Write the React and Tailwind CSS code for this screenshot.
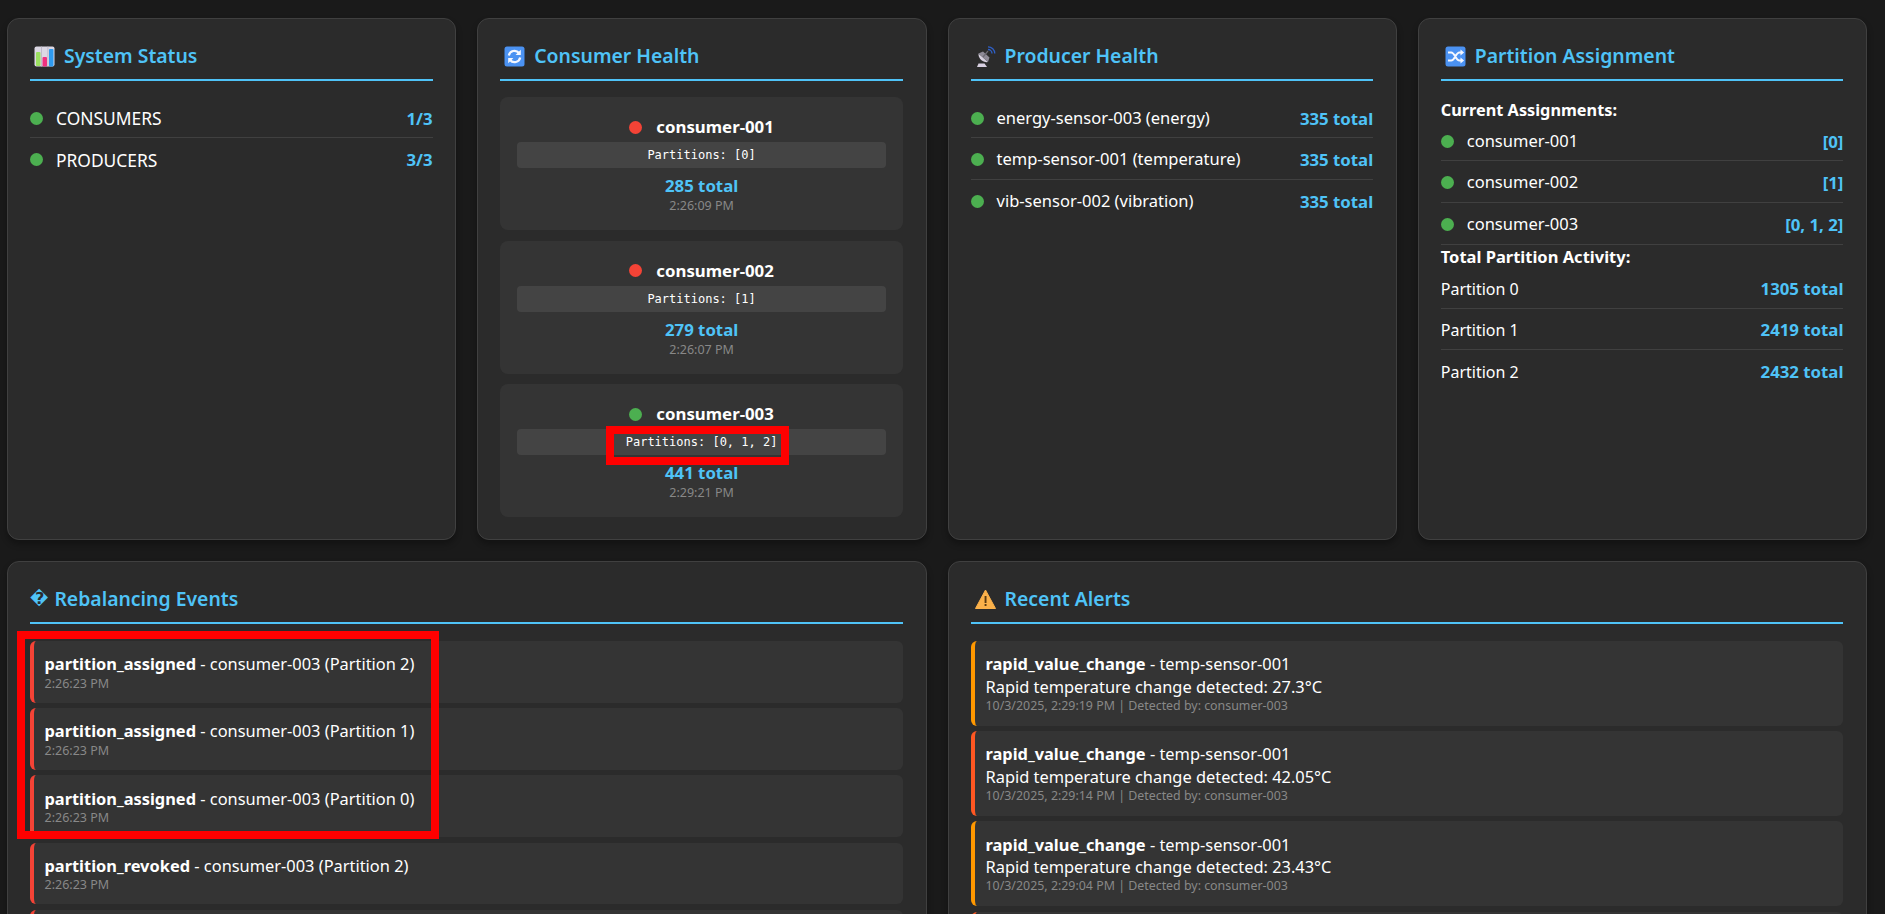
const Dot = ({ color = 'bg-[#4caf50]' }) => (
  <span className={`inline-block w-[13px] h-[13px] rounded-full shrink-0 ${color}`} />
)

const ChartIcon = () => (
  <svg width="21" height="21" viewBox="0 0 21 21" className="shrink-0">
    <rect x="0.5" y="0.5" width="20" height="20" rx="2" fill="#dcd8e4" />
    <rect x="7" y="0.5" width="0.8" height="20" fill="#b9b4c4" />
    <rect x="13.5" y="0.5" width="0.8" height="20" fill="#b9b4c4" />
    <rect x="2" y="6" width="4.5" height="14" rx="1" fill="#9be060" />
    <rect x="8.5" y="11" width="4.5" height="9.5" rx="1" fill="#f0307f" />
    <rect x="15" y="3" width="4.5" height="17.5" rx="1" fill="#2f9bf0" />
  </svg>
)

const RefreshIcon = () => (
  <svg width="21" height="21" viewBox="0 0 21 21" className="shrink-0">
    <rect x="0.5" y="0.5" width="20" height="20" rx="2.5" fill="#4b92f2" />
    <path d="M4.8 9.5A5.8 5.8 0 0 1 15 7" fill="none" stroke="#f4f7ff" strokeWidth="2.2" />
    <path d="M16.8 3.8V9h-5.2z" fill="#f4f7ff" />
    <path d="M16.2 11.5A5.8 5.8 0 0 1 6 14" fill="none" stroke="#f4f7ff" strokeWidth="2.2" />
    <path d="M4.2 17.2V12h5.2z" fill="#f4f7ff" />
  </svg>
)

const DishIcon = () => (
  <svg width="21" height="21" viewBox="0 0 21 21" className="shrink-0">
    <path d="M2 21l1.5-3.5h6L12 21z" fill="#d8d0e2" />
    <path d="M3.5 7.5A8 8 0 0 0 13 16z" fill="#d5cfdd" />
    <path d="M3.5 7.5L13 16l1.5-4.5L8 5.5z" fill="#8e8a96" />
    <path d="M8 11l5-6" stroke="#6d6a74" strokeWidth="1.2" />
    <path d="M13 3.5a4 4 0 0 1 4 4M13 .8a6.8 6.8 0 0 1 6.8 6.8" fill="none" stroke="#2f5fc4" strokeWidth="1.3" />
  </svg>
)

const ShuffleIcon = () => (
  <svg width="21" height="21" viewBox="0 0 21 21" className="shrink-0">
    <rect x="0.5" y="0.5" width="20" height="20" rx="2.5" fill="#4b92f2" />
    <path d="M3 6.5h3.2c3.6 0 4.6 8 8.2 8H16M3 14.5h3.2c3.6 0 4.6-8 8.2-8H16" fill="none" stroke="#f4f7ff" strokeWidth="2" />
    <path d="M15.5 3.5l3.6 3-3.6 3zM15.5 11.5l3.6 3-3.6 3z" fill="#f4f7ff" />
  </svg>
)

const WarningIcon = () => (
  <svg width="21" height="20" viewBox="0 0 21 20" className="shrink-0">
    <path d="M10.5 1L20.5 19.5H.5z" fill="#fbb14a" stroke="#fbb14a" strokeLinejoin="round" />
    <rect x="9.6" y="7" width="1.9" height="7" fill="#5a3a10" />
    <rect x="9.6" y="15" width="1.9" height="2" fill="#5a3a10" />
  </svg>
)

const Card = ({ icon, title, children }) => (
  <div className="bg-[#2b2b2b] border border-[#404040] rounded-xl pl-[22px] pr-[22.6px] py-[22px] shadow-[0_4px_6px_rgba(0,0,0,0.3)]">
    <h3 className="flex items-center pb-2 mb-4 border-b-2 border-[#4fc3f7] text-[19.4px] leading-[30px] font-semibold text-[#4fc3f7]">
      {icon}
      {title}
    </h3>
    {children}
  </div>
)

const Row = ({ label, value, dot = true, labelSize = 'text-[16.5px]' }) => (
  <div className={`flex items-center justify-between h-[41.3px] border-b border-[#404040] last:border-b-0 text-white ${dot ? 'pt-[2px]' : 'pt-[1px]'}`}>
    <div className="flex items-center">
      {dot && <Dot />}
      <span className={`${labelSize} ${dot ? 'ml-[13px]' : ''}`}>{label}</span>
    </div>
    <span className="text-[16.8px] font-bold text-[#4fc3f7]">{value}</span>
  </div>
)

const ConsumerCard = ({ name, color, partitions, total, time }) => (
  <div className="bg-[#343434] rounded-lg px-[16.5px] pt-[18px] pb-[16px] text-center">
    <div className="flex items-center justify-center h-6 text-[16.8px] font-bold text-white">
      <Dot color={color} />
      <span className="ml-[14px]">{name}</span>
    </div>
    <div className="mt-[3px] h-[26px] rounded bg-[#444444] font-['DejaVu_Sans_Mono',monospace] text-[12px] leading-[27px] text-white">
      Partitions: {partitions}
    </div>
    <div className="mt-[6px] text-[16.8px] leading-6 font-bold text-[#4fc3f7]">{total} total</div>
    <div className="text-[12.5px] leading-4 text-[#888888]">{time}</div>
  </div>
)

const EventItem = ({ type, text, time }) => (
  <div className="bg-[#343434] border-l-4 border-[#f44336] rounded-md pl-[10.5px] pt-[12.2px] pb-[11.2px] text-white">
    <div className="text-[16.4px] leading-[22.4px]">
      <strong className="font-bold">{type}</strong> - {text}
    </div>
    <div className="text-[12.5px] leading-[15.8px] text-[#888888]">{time}</div>
  </div>
)

const AlertItem = ({ border, value, time }) => (
  <div className={`bg-[#343434] border-l-4 ${border} rounded-md pl-[11px] pt-[12.2px] pb-[11.2px] text-white`}>
    <div className="text-[16.4px] leading-[22.4px]">
      <strong className="font-bold">rapid_value_change</strong> - temp-sensor-001
    </div>
    <div className="text-[16.4px] leading-[22px]">Rapid temperature change detected: {value}°C</div>
    <div className="text-[12.4px] leading-[16.8px] text-[#888888]">
      10/3/2025, {time} | Detected by: consumer-003
    </div>
  </div>
)

export default function App() {
  return (
    <div className="relative h-[914px] overflow-hidden bg-[#1a1a1a] pl-[7px] pr-[18px] pt-[18px] font-['Noto_Sans',sans-serif]">
      <div className="grid grid-cols-4 gap-[21px]">
        <Card icon={<span className="mr-[9px] ml-1"><ChartIcon /></span>} title="System Status">
          <Row label="CONSUMERS" value="1/3" labelSize="text-[17.4px]" />
          <Row label="PRODUCERS" value="3/3" labelSize="text-[17.4px]" />
        </Card>

        <Card icon={<span className="mr-[9px] ml-1"><RefreshIcon /></span>} title="Consumer Health">
          <div className="flex flex-col gap-[10.5px]">
            <ConsumerCard name="consumer-001" color="bg-[#f44336]" partitions="[0]" total="285" time="2:26:09 PM" />
            <ConsumerCard name="consumer-002" color="bg-[#f44336]" partitions="[1]" total="279" time="2:26:07 PM" />
            <ConsumerCard name="consumer-003" color="bg-[#4caf50]" partitions="[0, 1, 2]" total="441" time="2:29:21 PM" />
          </div>
        </Card>

        <Card icon={<span className="mr-[9px] ml-1"><DishIcon /></span>} title="Producer Health">
          <Row label="energy-sensor-003 (energy)" value="335 total" />
          <Row label="temp-sensor-001 (temperature)" value="335 total" />
          <Row label="vib-sensor-002 (vibration)" value="335 total" />
        </Card>

        <Card icon={<span className="mr-[9px] ml-1"><ShuffleIcon /></span>} title="Partition Assignment">
          <div className="h-[23px] text-[16.3px] leading-[26px] font-bold text-white">Current Assignments:</div>
          <div>
            <Row label="consumer-001" value="[0]" />
            <Row label="consumer-002" value="[1]" />
            <div className="border-b border-[#404040]">
              <Row label="consumer-003" value="[0, 1, 2]" />
            </div>
          </div>
          <div className="h-[23px] text-[16.5px] leading-6 font-bold text-white">Total Partition Activity:</div>
          <div>
            <Row dot={false} label="Partition 0" value="1305 total" labelSize="text-[16px]" />
            <Row dot={false} label="Partition 1" value="2419 total" labelSize="text-[16px]" />
            <Row dot={false} label="Partition 2" value="2432 total" labelSize="text-[16px]" />
          </div>
        </Card>
      </div>

      <div className="grid grid-cols-2 gap-[21px] mt-[21px]">
        <Card icon={<span className="mr-[6px] text-[16.5px] font-['DejaVu_Sans',sans-serif]">{'\uFFFD'}</span>} title="Rebalancing Events">
          <div className="flex flex-col gap-[5.6px] mt-[17px] mb-10">
            <EventItem type="partition_assigned" text="consumer-003 (Partition 2)" time="2:26:23 PM" />
            <EventItem type="partition_assigned" text="consumer-003 (Partition 1)" time="2:26:23 PM" />
            <EventItem type="partition_assigned" text="consumer-003 (Partition 0)" time="2:26:23 PM" />
            <EventItem type="partition_revoked" text="consumer-003 (Partition 2)" time="2:26:23 PM" />
            {/* next item only just starts above the fold */}
            <div className="h-[61.6px] bg-[#343434] border-l-4 border-[#f44336] rounded-md" />
          </div>
        </Card>

        <Card icon={<span className="mr-[9px] ml-1"><WarningIcon /></span>} title="Recent Alerts">
          <div className="flex flex-col gap-[5.6px] mt-[17px] mb-10">
            <AlertItem border="border-[#ff9800]" value="27.3" time="2:29:19 PM" />
            <AlertItem border="border-[#ff5722]" value="42.05" time="2:29:14 PM" />
            <AlertItem border="border-[#ff9800]" value="23.43" time="2:29:04 PM" />
            <div className="h-[84.6px] bg-[#343434] border-l-4 border-[#ff5722] rounded-md" />
          </div>
        </Card>
      </div>

      {/* red annotation boxes drawn over the screenshot */}
      <div className="absolute left-[606px] top-[426px] w-[183px] h-[39px] border-8 border-[#ff0000]" />
      <div className="absolute left-[17px] top-[631px] w-[422px] h-[208px] border-8 border-[#ff0000]" />
    </div>
  )
}
